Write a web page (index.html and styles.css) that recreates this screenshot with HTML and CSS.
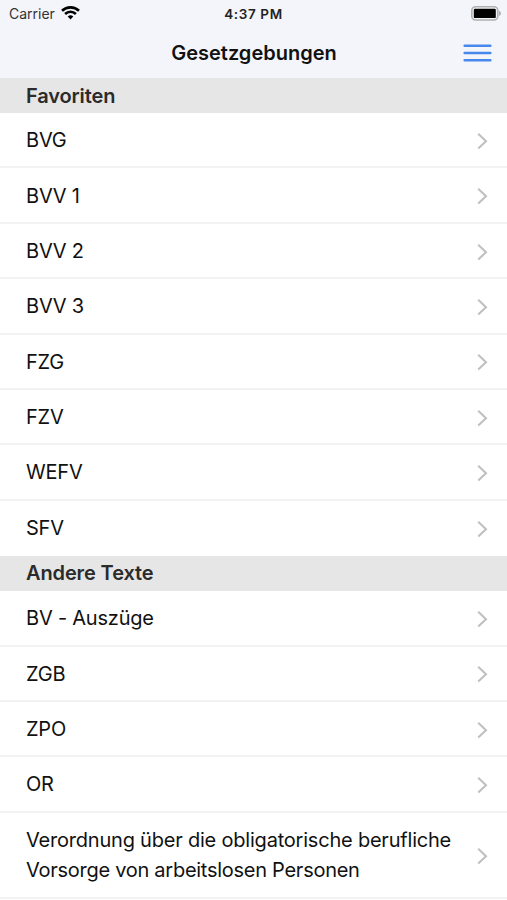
FILE: index.html
```html
<!DOCTYPE html>
<html lang="de">
<head>
<meta charset="utf-8">
<title>Gesetzgebungen</title>
<link rel="stylesheet" href="styles.css">
</head>
<body>
<svg width="0" height="0" class="defs"><symbol id="chevron" viewBox="0 0 12 18"><path d="M2.2 1.8 10 9.2l-7.8 7.4" fill="none" stroke="#c0c0c2" stroke-width="2.1"/></symbol></svg>
<header class="top">
  <div class="status">
    <div class="carrier"><span>Carrier</span>
      <svg width="19" height="14" viewBox="0 0 19 14"><g fill="none" stroke="#000" stroke-width="2.6"><path d="M1 4.8a12.2 12.2 0 0 1 17 0"/><path d="M4.1 8a7.7 7.7 0 0 1 10.8 0"/></g><path d="M9.5 13.6 6.7 10.6a4 4 0 0 1 5.6 0Z"/></svg>
    </div>
    <div class="time">4:37 PM</div>
    <svg class="battery" width="31" height="15" viewBox="0 0 31 15"><rect x=".8" y=".8" width="26" height="13.2" rx="3.8" fill="none" stroke="#b0b0b3" stroke-width="1.6"/><rect x="2.8" y="2.8" width="22" height="9.3" rx="1.2"/><path d="M28 4.8c2.6 1 2.6 4.2 0 5.2Z" fill="#b0b0b3"/></svg>
  </div>
  <div class="nav">
    <h1>Gesetzgebungen</h1>
    <svg class="menu" width="29" height="18" viewBox="0 0 29 18"><path d="M1.7 1.7h25.6M1.7 9h25.6M1.7 16.3h25.6" stroke="#4788ec" stroke-width="2.6" stroke-linecap="round"/></svg>
  </div>
</header>
<main>
  <h2>Favoriten</h2>
  <ul>
    <li><span>BVG</span><svg><use href="#chevron"/></svg></li>
    <li><span>BVV 1</span><svg><use href="#chevron"/></svg></li>
    <li><span>BVV 2</span><svg><use href="#chevron"/></svg></li>
    <li><span>BVV 3</span><svg><use href="#chevron"/></svg></li>
    <li><span>FZG</span><svg><use href="#chevron"/></svg></li>
    <li><span>FZV</span><svg><use href="#chevron"/></svg></li>
    <li><span>WEFV</span><svg><use href="#chevron"/></svg></li>
    <li><span>SFV</span><svg><use href="#chevron"/></svg></li>
  </ul>
  <h2>Andere Texte</h2>
  <ul>
    <li><span>BV - Auszüge</span><svg><use href="#chevron"/></svg></li>
    <li><span>ZGB</span><svg><use href="#chevron"/></svg></li>
    <li><span>ZPO</span><svg><use href="#chevron"/></svg></li>
    <li><span>OR</span><svg><use href="#chevron"/></svg></li>
    <li class="tall"><span>Verordnung über die obligatorische berufliche<br><span class="second">Vorsorge von arbeitslosen Personen</span></span><svg><use href="#chevron"/></svg></li>
  </ul>
</main>
</body>
</html>
```
FILE: styles.css
```css
* { box-sizing: border-box; }
body { margin: 0; height: 900px; overflow: hidden; background: #fff; color: #111; font-family: Inter, sans-serif; }
.defs { display: block; height: 0; }
.top { height: 78px; background: #f4f5fa; }
.status { height: 27px; display: grid; grid-template-columns: 1fr auto 1fr; align-items: center; padding: 0 5px 0 9px; font-size: 14px; }
.carrier { display: flex; align-items: center; gap: 6px; color: #333; }
.carrier svg { margin-top: -2px; }
.time { font-weight: 600; font-size: 13.5px; letter-spacing: .6px; color: #222; margin-right: 4px; }
.battery { justify-self: end; }
.nav { height: 51px; display: grid; grid-template-columns: 1fr auto 1fr; align-items: center; padding: 0 15px 0 16px; }
h1 { grid-column: 2; margin: 0; font-size: 20px; font-weight: 600; }
.menu { justify-self: end; }
h2 { margin: 0; height: 35px; line-height: 36px; padding-left: 26px; background: #e6e6e6; font-size: 20px; font-weight: 600; letter-spacing: -.12px; color: #2b2b2b; }
ul + h2 { line-height: 35px; }
ul { margin: 0; padding: 0; list-style: none; }
li { height: 55.4px; border-bottom: 2px solid #f2f2f3; display: flex; align-items: center; justify-content: space-between; padding: 1.4px 19px 0 26px; font-size: 20px; line-height: 30.5px; letter-spacing: -.21px; }
ul:first-of-type li:last-child { border-bottom: 0; padding-bottom: 2px; }
li svg { width: 12px; height: 18px; flex: none; margin-top: 1px; }
li.tall { height: 86px; }
.second { letter-spacing: -.27px; }
```
